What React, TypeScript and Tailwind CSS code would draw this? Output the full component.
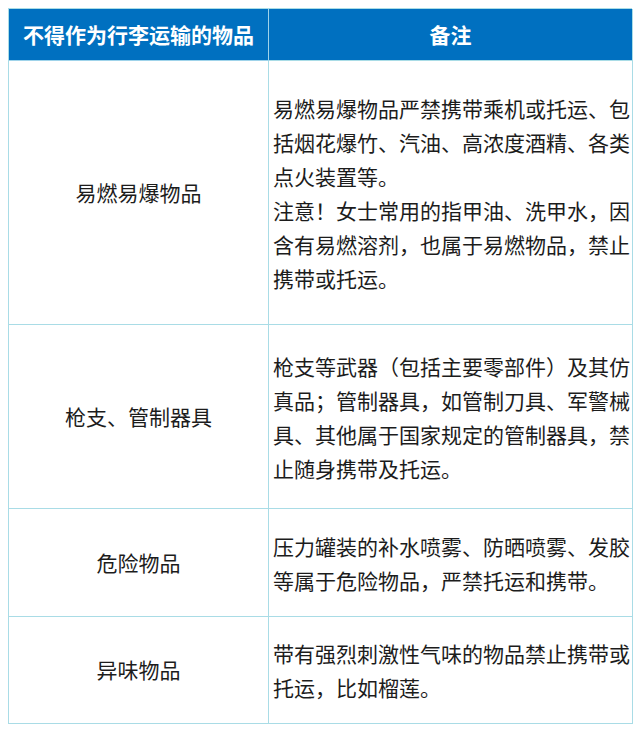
const rows = [
  {
    name: "易燃易爆物品",
    h: "h-[264px]",
    lines: [
      "易燃易爆物品严禁携带乘机或托运、包",
      "括烟花爆竹、汽油、高浓度酒精、各类",
      "点火装置等。",
      "注意！女士常用的指甲油、洗甲水，因",
      "含有易燃溶剂，也属于易燃物品，禁止",
      "携带或托运。",
    ],
  },
  {
    name: "枪支、管制器具",
    h: "h-[184px]",
    lines: [
      "枪支等武器（包括主要零部件）及其仿",
      "真品；管制器具，如管制刀具、军警械",
      "具、其他属于国家规定的管制器具，禁",
      "止随身携带及托运。",
    ],
  },
  {
    name: "危险物品",
    h: "h-[108px]",
    lines: ["压力罐装的补水喷雾、防晒喷雾、发胶", "等属于危险物品，严禁托运和携带。"],
  },
  {
    name: "异味物品",
    h: "h-[107px]",
    lines: ["带有强烈刺激性气味的物品禁止携带或", "托运，比如榴莲。"],
  },
];

export default function App() {
  return (
    <div className="min-h-[732px] w-[640px] bg-white pt-[8px] pl-[8px] font-['Noto_Sans_CJK_SC','Noto_Sans',sans-serif] text-[21px] text-[#1c1c1c]">
      <div className="grid w-[624px] grid-cols-[260px_364px] border-l border-t border-[#a9dce6]">
        {/* Header */}
        <div className="flex h-[52px] items-center justify-center border-b border-r border-[#9fd3ea] bg-[#0070c0] font-bold text-white">
          不得作为行李运输的物品
        </div>
        <div className="flex h-[52px] items-center justify-center border-b border-r border-[#a9dce6] bg-[#0070c0] font-bold text-white">
          备注
        </div>

        {rows.map((row) => (
          <div key={row.name} className="contents">
            <div className={`flex ${row.h} items-center justify-center border-b border-r border-[#a9dce6]`}>
              {row.name}
            </div>
            <div className={`flex ${row.h} flex-col justify-center border-b border-r border-[#a9dce6] pl-[4px] leading-[34px]`}>
              {row.lines.map((line) => (
                <span key={line} className="whitespace-nowrap">
                  {line}
                </span>
              ))}
            </div>
          </div>
        ))}
      </div>
    </div>
  );
}
